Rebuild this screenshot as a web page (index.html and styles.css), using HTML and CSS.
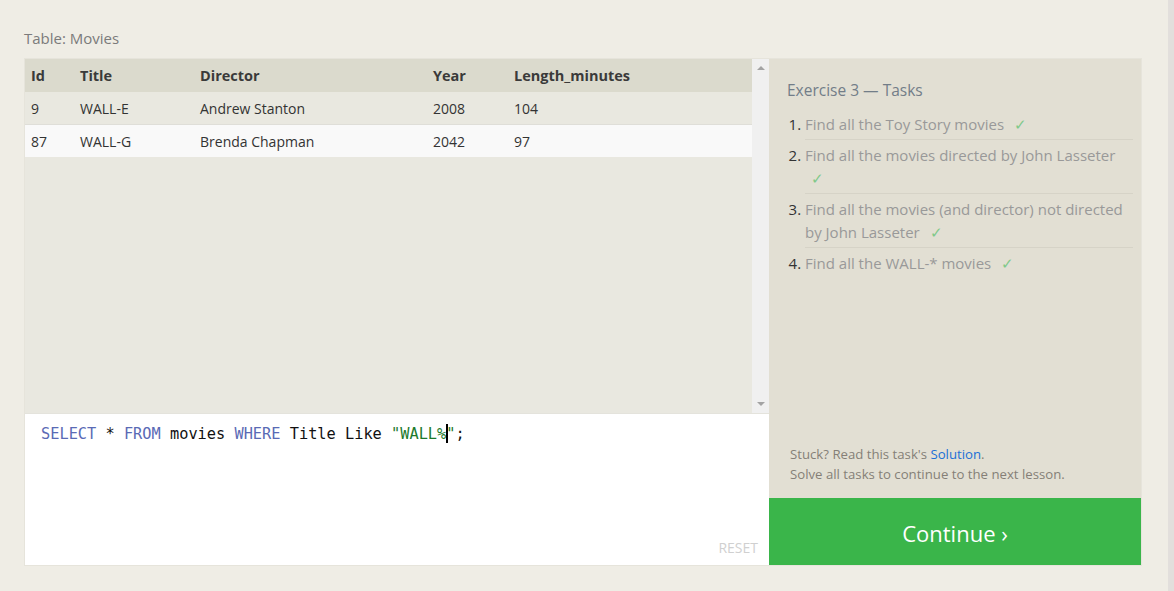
FILE: index.html
```html
<!DOCTYPE html>
<html>
<head>
<meta charset="utf-8">
<link rel="stylesheet" href="styles.css">
</head>
<body>
<div class="page">
  <div class="main">
    <div class="label">Table: Movies</div>
    <div class="box">
      <div class="left">
        <div class="results">
          <div class="table-wrap">
            <table class="tbl">
              <thead>
                <tr><th class="c-id">Id</th><th class="c-title">Title</th><th class="c-dir">Director</th><th class="c-year">Year</th><th>Length_minutes</th></tr>
              </thead>
              <tbody>
                <tr class="odd"><td>9</td><td>WALL-E</td><td>Andrew Stanton</td><td>2008</td><td>104</td></tr>
                <tr class="even"><td>87</td><td>WALL-G</td><td>Brenda Chapman</td><td>2042</td><td>97</td></tr>
              </tbody>
            </table>
          </div>
          <div class="scrollbar">
            <span class="arrow up"></span>
            <span class="arrow down"></span>
          </div>
        </div>
        <div class="editor">
          <div class="code"><span class="kw">SELECT</span> * <span class="kw">FROM</span> movies <span class="kw">WHERE</span> Title Like <span class="str">"WALL%<span class="cursor"></span>"</span>;</div>
          <div class="reset">RESET</div>
        </div>
      </div>
      <div class="right">
        <div class="tasks">
          <div class="tasks-title">Exercise 3 — Tasks</div>
          <ol class="task-list">
            <li>Find all the Toy Story movies <span class="check">✓</span></li>
            <li>Find all the movies directed by John Lasseter <span class="check">✓</span></li>
            <li>Find all the movies (and director) not directed by John Lasseter <span class="check">✓</span></li>
            <li class="last">Find all the WALL-* movies <span class="check">✓</span></li>
          </ol>
          <div class="help">
            <div>Stuck? Read this task's <span class="link">Solution</span>.</div>
            <div>Solve all tasks to continue to the next lesson.</div>
          </div>
        </div>
        <div class="continue">Continue ›</div>
      </div>
    </div>
  </div>
  <div class="edge"></div>
</div>
</body>
</html>
```

FILE: styles.css
```css
html, body {
  margin: 0;
  padding: 0;
}
body {
  background: #efede5;
  font-family: "Open Sans", "Noto Sans", sans-serif;
  width: 1174px;
  height: 591px;
  overflow: hidden;
}
.page {
  display: flex;
  height: 591px;
}
.main {
  flex: 1;
  padding: 27px 0 0 24px;
}
.edge {
  width: 6px;
  background: #e2dfdc;
}
.label {
  font-size: 15px;
  color: #7b7b7b;
  line-height: 22px;
  height: 31px;
}
.box {
  display: flex;
  width: 1118px;
  border: 1px solid #e6e4db;
  box-sizing: border-box;
}
.left {
  width: 744px;
  display: flex;
  flex-direction: column;
}
.results {
  display: flex;
  height: 354px;
  background: #e9e8e0;
}
.table-wrap {
  flex: 1;
}
.tbl {
  width: 100%;
  border-collapse: collapse;
  font-size: 14px;
  color: #333;
}
.tbl th {
  text-align: left;
  font-weight: 700;
  font-size: 14.5px;
  background: #dbdacd;
  height: 33px;
  padding: 0 0 0 6px;
  color: #3a3a3a;
}
.tbl td {
  height: 32px;
  padding: 0 0 0 6px;
}
.c-id { width: 43px; }
.c-title { width: 114px; }
.c-dir { width: 227px; }
.c-year { width: 75px; }
.tbl tr.odd td {
  background: #e9e8e0;
  border-bottom: 1px solid #dfded8;
}
.tbl tr.even td {
  background: #f9f9f9;
}
.scrollbar {
  width: 17px;
  background: #f0f0f0;
  display: flex;
  flex-direction: column;
  justify-content: space-between;
  align-items: center;
  padding: 7px 0 7px;
  box-sizing: border-box;
}
.arrow {
  width: 0;
  height: 0;
  border-left: 4px solid transparent;
  border-right: 4px solid transparent;
}
.arrow.up { border-bottom: 4px solid #a3a3a3; }
.arrow.down { border-top: 4px solid #a3a3a3; }
.editor {
  background: #fff;
  height: 152px;
  position: relative;
  border-top: 1px solid #e4e3dc;
  box-sizing: border-box;
}
.code {
  font-family: "DejaVu Sans Mono", "Liberation Mono", monospace;
  font-size: 15.3px;
  color: #111;
  padding: 10px 0 0 16px;
  line-height: 20px;
}
.kw { color: #5a6ab5; }
.str { color: #1c7a2b; }
.cursor {
  display: inline-block;
  width: 2px;
  height: 19px;
  background: #000;
  vertical-align: -4px;
  margin-right: -2px;
}
.reset {
  position: absolute;
  right: 11px;
  bottom: 8px;
  font-size: 14px;
  color: #d0d0d0;
}
.right {
  width: 372px;
  display: flex;
  flex-direction: column;
}
.tasks {
  flex: 1;
  background: #e2dfd3;
  padding: 20px 8px 0 18px;
  display: flex;
  flex-direction: column;
}
.tasks-title {
  font-size: 15.5px;
  color: #727d88;
  line-height: 22px;
  margin-bottom: 8px;
}
.task-list {
  margin: 0;
  padding: 0 0 0 18px;
  font-size: 15px;
  color: #999;
}
.task-list li {
  line-height: 23px;
  padding: 4px 0 3px;
  border-bottom: 1px solid #d6d3c7;
}
.task-list li::marker {
  color: #333;
}
.task-list li.last { border-bottom: none; }
.check {
  color: #7fc98a;
  margin-left: 6px;
}
.help {
  margin-top: auto;
  padding: 0 0 14px 3px;
  font-size: 13.2px;
  color: #857f77;
  line-height: 20px;
}
.link { color: #1a6fd6; }
.continue {
  height: 67px;
  background: #3ab54a;
  color: #fff;
  font-size: 22px;
  display: flex;
  align-items: center;
  justify-content: center;
  padding-top: 2px;
  box-sizing: border-box;
}
```
